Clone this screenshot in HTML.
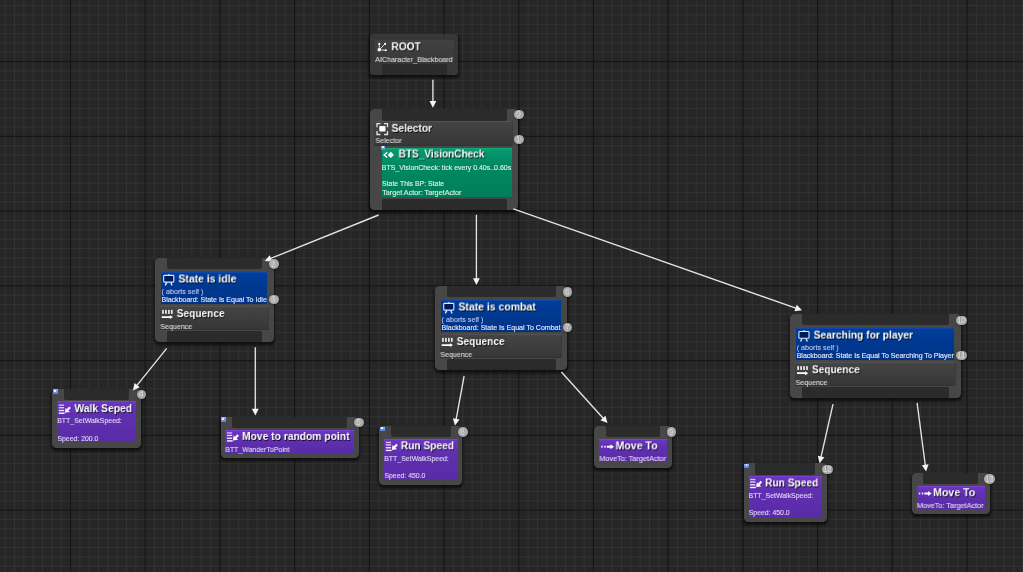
<!DOCTYPE html><html><head><meta charset="utf-8"><title>Behavior Tree</title><style>

html,body{margin:0;padding:0;background:#262626;}
body{width:1023px;height:572px;overflow:hidden;position:relative;font-family:"Liberation Sans", sans-serif;}
.grid,.ov{position:absolute;left:0;top:0;}

div{position:absolute;box-sizing:border-box;}
.node{background:#474747;border-radius:4.5px;box-shadow:0 2px 3px 0.5px rgba(0,0,0,0.62);}
.pin{background:#2b2b2b;}
.pt{border-radius:0 0 2px 2px;}
.pb{border-radius:1.5px 1.5px 0 0;}
.rootn{background:rgba(60,60,60,0.78);border-radius:3.5px;}
.rootbody{background:linear-gradient(rgba(72,72,72,0.55),rgba(60,60,60,0.35));border-radius:1.5px;}
.comp{background:linear-gradient(#444444,#373737);border-top:1px solid #525252;border-bottom:1px solid #323232;border-right:1px solid #3a3a3a;}
.green{background:linear-gradient(#089a70,#008a63 30%,#007e5a);border-top:1px solid #12a67b;}
.blue{background:linear-gradient(#013d9a,#003890 50%,#003385);border-top:1px solid #0c48a8;}
.purple{background:linear-gradient(#6b35c2,#6030b2 30%,#5a2ba6);border-top:1px solid #7a40d2;}
.badge{height:9.5px;border-radius:4.75px;background:radial-gradient(ellipse at 48% 45%,#b6b6b6 25%,#969696 100%);box-shadow:0 0.5px 1.5px rgba(0,0,0,0.6);text-align:center;overflow:visible;}
.badge span{position:absolute;left:0;right:0;top:0.6px;font-size:8.6px;line-height:9px;color:#dedede;text-shadow:0.5px 0.4px 0.4px rgba(80,80,80,0.6);letter-spacing:-0.5px;text-indent:-0.5px;will-change:transform;}
.bsq{width:4.5px;height:4.5px;background:linear-gradient(#8fb2ff,#4f7df0);}
.bsq i{position:absolute;left:1.4px;top:0.8px;width:1.7px;height:1.8px;background:#e8f0ff;display:block;}
.txl{left:0;top:0;width:1023px;height:572px;will-change:transform;}
.tx{position:absolute;left:0;top:0;white-space:nowrap;transform-origin:0 0;line-height:1;}
.title{will-change:transform;line-height:20px;font-weight:bold;font-size:11.70px;color:#fff;text-shadow:0.9px 0.9px 0 rgba(0,0,0,0.85);}
.sub{line-height:21px;font-size:7.50px;color:#d4d4d4;-webkit-text-stroke:0.15px;}

</style></head><body>
<svg class="grid" width="1023" height="572"><g fill="#323232"><rect x="4.58" y="0" width="1.1" height="572"/><rect x="13.92" y="0" width="1.1" height="572"/><rect x="23.26" y="0" width="1.1" height="572"/><rect x="32.60" y="0" width="1.1" height="572"/><rect x="41.93" y="0" width="1.1" height="572"/><rect x="51.27" y="0" width="1.1" height="572"/><rect x="60.61" y="0" width="1.1" height="572"/><rect x="79.29" y="0" width="1.1" height="572"/><rect x="88.63" y="0" width="1.1" height="572"/><rect x="97.97" y="0" width="1.1" height="572"/><rect x="107.30" y="0" width="1.1" height="572"/><rect x="116.64" y="0" width="1.1" height="572"/><rect x="125.98" y="0" width="1.1" height="572"/><rect x="135.32" y="0" width="1.1" height="572"/><rect x="154.00" y="0" width="1.1" height="572"/><rect x="163.34" y="0" width="1.1" height="572"/><rect x="172.68" y="0" width="1.1" height="572"/><rect x="182.01" y="0" width="1.1" height="572"/><rect x="191.35" y="0" width="1.1" height="572"/><rect x="200.69" y="0" width="1.1" height="572"/><rect x="210.03" y="0" width="1.1" height="572"/><rect x="228.71" y="0" width="1.1" height="572"/><rect x="238.05" y="0" width="1.1" height="572"/><rect x="247.39" y="0" width="1.1" height="572"/><rect x="256.72" y="0" width="1.1" height="572"/><rect x="266.06" y="0" width="1.1" height="572"/><rect x="275.40" y="0" width="1.1" height="572"/><rect x="284.74" y="0" width="1.1" height="572"/><rect x="303.42" y="0" width="1.1" height="572"/><rect x="312.76" y="0" width="1.1" height="572"/><rect x="322.10" y="0" width="1.1" height="572"/><rect x="331.43" y="0" width="1.1" height="572"/><rect x="340.77" y="0" width="1.1" height="572"/><rect x="350.11" y="0" width="1.1" height="572"/><rect x="359.45" y="0" width="1.1" height="572"/><rect x="378.13" y="0" width="1.1" height="572"/><rect x="387.47" y="0" width="1.1" height="572"/><rect x="396.81" y="0" width="1.1" height="572"/><rect x="406.14" y="0" width="1.1" height="572"/><rect x="415.48" y="0" width="1.1" height="572"/><rect x="424.82" y="0" width="1.1" height="572"/><rect x="434.16" y="0" width="1.1" height="572"/><rect x="452.84" y="0" width="1.1" height="572"/><rect x="462.18" y="0" width="1.1" height="572"/><rect x="471.52" y="0" width="1.1" height="572"/><rect x="480.85" y="0" width="1.1" height="572"/><rect x="490.19" y="0" width="1.1" height="572"/><rect x="499.53" y="0" width="1.1" height="572"/><rect x="508.87" y="0" width="1.1" height="572"/><rect x="527.55" y="0" width="1.1" height="572"/><rect x="536.89" y="0" width="1.1" height="572"/><rect x="546.23" y="0" width="1.1" height="572"/><rect x="555.57" y="0" width="1.1" height="572"/><rect x="564.90" y="0" width="1.1" height="572"/><rect x="574.24" y="0" width="1.1" height="572"/><rect x="583.58" y="0" width="1.1" height="572"/><rect x="602.26" y="0" width="1.1" height="572"/><rect x="611.60" y="0" width="1.1" height="572"/><rect x="620.94" y="0" width="1.1" height="572"/><rect x="630.27" y="0" width="1.1" height="572"/><rect x="639.61" y="0" width="1.1" height="572"/><rect x="648.95" y="0" width="1.1" height="572"/><rect x="658.29" y="0" width="1.1" height="572"/><rect x="676.97" y="0" width="1.1" height="572"/><rect x="686.31" y="0" width="1.1" height="572"/><rect x="695.65" y="0" width="1.1" height="572"/><rect x="704.99" y="0" width="1.1" height="572"/><rect x="714.32" y="0" width="1.1" height="572"/><rect x="723.66" y="0" width="1.1" height="572"/><rect x="733.00" y="0" width="1.1" height="572"/><rect x="751.68" y="0" width="1.1" height="572"/><rect x="761.02" y="0" width="1.1" height="572"/><rect x="770.36" y="0" width="1.1" height="572"/><rect x="779.69" y="0" width="1.1" height="572"/><rect x="789.03" y="0" width="1.1" height="572"/><rect x="798.37" y="0" width="1.1" height="572"/><rect x="807.71" y="0" width="1.1" height="572"/><rect x="826.39" y="0" width="1.1" height="572"/><rect x="835.73" y="0" width="1.1" height="572"/><rect x="845.07" y="0" width="1.1" height="572"/><rect x="854.40" y="0" width="1.1" height="572"/><rect x="863.74" y="0" width="1.1" height="572"/><rect x="873.08" y="0" width="1.1" height="572"/><rect x="882.42" y="0" width="1.1" height="572"/><rect x="901.10" y="0" width="1.1" height="572"/><rect x="910.44" y="0" width="1.1" height="572"/><rect x="919.78" y="0" width="1.1" height="572"/><rect x="929.12" y="0" width="1.1" height="572"/><rect x="938.45" y="0" width="1.1" height="572"/><rect x="947.79" y="0" width="1.1" height="572"/><rect x="957.13" y="0" width="1.1" height="572"/><rect x="975.81" y="0" width="1.1" height="572"/><rect x="985.15" y="0" width="1.1" height="572"/><rect x="994.49" y="0" width="1.1" height="572"/><rect x="1003.82" y="0" width="1.1" height="572"/><rect x="1013.16" y="0" width="1.1" height="572"/><rect x="1022.50" y="0" width="1.1" height="572"/><rect x="0" y="4.98" width="1023" height="1.1"/><rect x="0" y="14.32" width="1023" height="1.1"/><rect x="0" y="23.67" width="1023" height="1.1"/><rect x="0" y="33.02" width="1023" height="1.1"/><rect x="0" y="42.36" width="1023" height="1.1"/><rect x="0" y="51.71" width="1023" height="1.1"/><rect x="0" y="70.40" width="1023" height="1.1"/><rect x="0" y="79.74" width="1023" height="1.1"/><rect x="0" y="89.09" width="1023" height="1.1"/><rect x="0" y="98.43" width="1023" height="1.1"/><rect x="0" y="107.78" width="1023" height="1.1"/><rect x="0" y="117.12" width="1023" height="1.1"/><rect x="0" y="126.47" width="1023" height="1.1"/><rect x="0" y="145.16" width="1023" height="1.1"/><rect x="0" y="154.50" width="1023" height="1.1"/><rect x="0" y="163.84" width="1023" height="1.1"/><rect x="0" y="173.19" width="1023" height="1.1"/><rect x="0" y="182.53" width="1023" height="1.1"/><rect x="0" y="191.88" width="1023" height="1.1"/><rect x="0" y="201.22" width="1023" height="1.1"/><rect x="0" y="219.91" width="1023" height="1.1"/><rect x="0" y="229.26" width="1023" height="1.1"/><rect x="0" y="238.60" width="1023" height="1.1"/><rect x="0" y="247.95" width="1023" height="1.1"/><rect x="0" y="257.30" width="1023" height="1.1"/><rect x="0" y="266.64" width="1023" height="1.1"/><rect x="0" y="275.99" width="1023" height="1.1"/><rect x="0" y="294.68" width="1023" height="1.1"/><rect x="0" y="304.02" width="1023" height="1.1"/><rect x="0" y="313.37" width="1023" height="1.1"/><rect x="0" y="322.71" width="1023" height="1.1"/><rect x="0" y="332.06" width="1023" height="1.1"/><rect x="0" y="341.40" width="1023" height="1.1"/><rect x="0" y="350.75" width="1023" height="1.1"/><rect x="0" y="369.44" width="1023" height="1.1"/><rect x="0" y="378.78" width="1023" height="1.1"/><rect x="0" y="388.13" width="1023" height="1.1"/><rect x="0" y="397.47" width="1023" height="1.1"/><rect x="0" y="406.82" width="1023" height="1.1"/><rect x="0" y="416.16" width="1023" height="1.1"/><rect x="0" y="425.51" width="1023" height="1.1"/><rect x="0" y="444.20" width="1023" height="1.1"/><rect x="0" y="453.54" width="1023" height="1.1"/><rect x="0" y="462.89" width="1023" height="1.1"/><rect x="0" y="472.23" width="1023" height="1.1"/><rect x="0" y="481.58" width="1023" height="1.1"/><rect x="0" y="490.92" width="1023" height="1.1"/><rect x="0" y="500.27" width="1023" height="1.1"/><rect x="0" y="518.96" width="1023" height="1.1"/><rect x="0" y="528.30" width="1023" height="1.1"/><rect x="0" y="537.65" width="1023" height="1.1"/><rect x="0" y="546.99" width="1023" height="1.1"/><rect x="0" y="556.34" width="1023" height="1.1"/><rect x="0" y="565.68" width="1023" height="1.1"/></g><g fill="#151515"><rect x="69.95" y="0" width="1.1" height="572"/><rect x="144.66" y="0" width="1.1" height="572"/><rect x="219.37" y="0" width="1.1" height="572"/><rect x="294.08" y="0" width="1.1" height="572"/><rect x="368.79" y="0" width="1.1" height="572"/><rect x="443.50" y="0" width="1.1" height="572"/><rect x="518.21" y="0" width="1.1" height="572"/><rect x="592.92" y="0" width="1.1" height="572"/><rect x="667.63" y="0" width="1.1" height="572"/><rect x="742.34" y="0" width="1.1" height="572"/><rect x="817.05" y="0" width="1.1" height="572"/><rect x="891.76" y="0" width="1.1" height="572"/><rect x="966.47" y="0" width="1.1" height="572"/><rect x="0" y="61.05" width="1023" height="1.1"/><rect x="0" y="135.81" width="1023" height="1.1"/><rect x="0" y="210.57" width="1023" height="1.1"/><rect x="0" y="285.33" width="1023" height="1.1"/><rect x="0" y="360.09" width="1023" height="1.1"/><rect x="0" y="434.85" width="1023" height="1.1"/><rect x="0" y="509.61" width="1023" height="1.1"/></g></svg>
<div class="node rootn" style="left:370.30px;top:34.20px;width:87.80px;height:41.20px;"></div>
<div class="rootbody" style="left:375.00px;top:40.00px;width:79.20px;height:23.40px;"></div>
<div class="pin pb" style="left:381.70px;top:64.20px;width:65.00px;height:11.20px;"></div>
<div class="node" style="left:370.00px;top:109.00px;width:148.00px;height:100.90px;"></div>
<div class="pin pt" style="left:381.60px;top:109.00px;width:125.40px;height:11.60px;"></div>
<div class="comp" style="left:374.20px;top:121.00px;width:139.10px;height:24.70px;"></div>
<div class="green" style="left:381.70px;top:147.50px;width:130.80px;height:49.80px;"></div>
<div class="pin pb" style="left:381.60px;top:199.00px;width:125.40px;height:10.90px;"></div>
<div class="bsq" style="left:380.70px;top:145.50px;"><i></i></div>
<div class="node" style="left:155.10px;top:257.90px;width:118.90px;height:84.00px;"></div>
<div class="pin pt" style="left:166.90px;top:257.90px;width:95.20px;height:11.30px;"></div>
<div class="blue" style="left:160.80px;top:271.90px;width:106.60px;height:32.40px;"></div>
<div class="comp" style="left:159.90px;top:306.20px;width:108.90px;height:23.90px;"></div>
<div class="pin pb" style="left:166.90px;top:331.20px;width:95.20px;height:10.70px;"></div>
<div class="node" style="left:435.10px;top:285.90px;width:132.40px;height:84.00px;"></div>
<div class="pin pt" style="left:446.90px;top:285.90px;width:108.70px;height:11.30px;"></div>
<div class="blue" style="left:440.80px;top:299.90px;width:120.10px;height:32.40px;"></div>
<div class="comp" style="left:439.90px;top:334.20px;width:122.40px;height:23.90px;"></div>
<div class="pin pb" style="left:446.90px;top:359.20px;width:108.70px;height:10.70px;"></div>
<div class="node" style="left:790.30px;top:314.00px;width:170.50px;height:84.00px;"></div>
<div class="pin pt" style="left:802.10px;top:314.00px;width:146.80px;height:11.30px;"></div>
<div class="blue" style="left:796.00px;top:328.00px;width:158.20px;height:32.40px;"></div>
<div class="comp" style="left:795.10px;top:362.30px;width:160.50px;height:23.90px;"></div>
<div class="pin pb" style="left:802.10px;top:387.30px;width:146.80px;height:10.70px;"></div>
<div class="node" style="left:52.20px;top:388.90px;width:88.50px;height:58.70px;"></div>
<div class="pin pt" style="left:64.00px;top:388.90px;width:64.90px;height:11.40px;"></div>
<div class="purple" style="left:57.20px;top:401.40px;width:78.70px;height:40.90px;"></div>
<div class="bsq" style="left:53.10px;top:389.40px;"><i></i></div>
<div class="node" style="left:379.20px;top:426.10px;width:83.20px;height:58.70px;"></div>
<div class="pin pt" style="left:391.00px;top:426.10px;width:59.60px;height:11.40px;"></div>
<div class="purple" style="left:384.20px;top:438.60px;width:73.40px;height:40.90px;"></div>
<div class="bsq" style="left:380.10px;top:426.60px;"><i></i></div>
<div class="node" style="left:743.50px;top:463.20px;width:83.30px;height:58.70px;"></div>
<div class="pin pt" style="left:755.30px;top:463.20px;width:59.70px;height:11.40px;"></div>
<div class="purple" style="left:748.50px;top:475.70px;width:73.50px;height:40.90px;"></div>
<div class="bsq" style="left:744.40px;top:463.70px;"><i></i></div>
<div class="node" style="left:220.50px;top:416.60px;width:138.20px;height:41.60px;"></div>
<div class="pin pt" style="left:231.80px;top:416.60px;width:115.60px;height:11.60px;"></div>
<div class="purple" style="left:225.30px;top:429.50px;width:128.60px;height:23.60px;"></div>
<div class="bsq" style="left:221.10px;top:417.10px;"><i></i></div>
<div class="node" style="left:594.00px;top:426.30px;width:77.90px;height:41.40px;"></div>
<div class="pin pt" style="left:605.80px;top:426.30px;width:54.30px;height:10.90px;"></div>
<div class="purple" style="left:599.10px;top:438.70px;width:67.80px;height:23.60px;"></div>
<div class="node" style="left:911.60px;top:473.10px;width:78.00px;height:41.40px;"></div>
<div class="pin pt" style="left:923.40px;top:473.10px;width:54.40px;height:10.90px;"></div>
<div class="purple" style="left:916.70px;top:485.50px;width:67.90px;height:23.60px;"></div>
<svg class="ov" width="1023" height="572"><g stroke="#e4e4e4" stroke-width="1.35" fill="#f4f4f4">
<line x1="432.90" y1="79.80" x2="432.90" y2="102.00"/>
<polygon stroke="none" points="432.90,107.80 429.50,101.00 436.30,101.00"/>
<line x1="378.60" y1="215.00" x2="270.08" y2="258.73"/>
<polygon stroke="none" points="264.70,260.90 269.74,255.20 272.28,261.51"/>
<line x1="476.40" y1="214.80" x2="476.40" y2="279.20"/>
<polygon stroke="none" points="476.40,285.00 473.00,278.20 479.80,278.20"/>
<line x1="513.30" y1="208.80" x2="796.53" y2="308.38"/>
<polygon stroke="none" points="802.00,310.30 794.46,311.25 796.71,304.84"/>
<line x1="166.70" y1="348.40" x2="136.54" y2="385.88"/>
<polygon stroke="none" points="132.90,390.40 134.51,382.97 139.81,387.23"/>
<line x1="255.30" y1="347.30" x2="255.30" y2="409.80"/>
<polygon stroke="none" points="255.30,415.60 251.90,408.80 258.70,408.80"/>
<line x1="464.10" y1="376.20" x2="456.05" y2="419.80"/>
<polygon stroke="none" points="455.00,425.50 452.89,418.20 459.58,419.43"/>
<line x1="561.40" y1="372.00" x2="603.61" y2="418.70"/>
<polygon stroke="none" points="607.50,423.00 600.42,420.24 605.46,415.68"/>
<line x1="833.00" y1="404.20" x2="820.88" y2="457.54"/>
<polygon stroke="none" points="819.60,463.20 817.79,455.82 824.42,457.32"/>
<line x1="917.10" y1="402.90" x2="925.35" y2="465.75"/>
<polygon stroke="none" points="926.10,471.50 921.84,465.20 928.59,464.32"/>
</g></svg>
<svg class="ov" width="1023" height="572">
<g stroke="#e8e8e8" stroke-width="0.9" fill="#fff"><line x1="379.2" y1="49.8" x2="379.3" y2="43.9"/><line x1="379.2" y1="49.8" x2="385.1" y2="43.9"/><line x1="379.2" y1="49.8" x2="385.8" y2="50.2"/><circle cx="379.2" cy="49.8" r="1.7" stroke="none"/><circle cx="379.3" cy="43.9" r="1.05" stroke="none"/><circle cx="385.1" cy="43.9" r="1.05" stroke="none"/><circle cx="385.8" cy="50.2" r="1.05" stroke="none"/></g>
<path d="M377.00 126.50 v-2.80 M377.00 123.70 h2.80 M384.70 123.70 h2.80 M387.50 123.70 v2.80 M377.00 131.70 v2.80 M377.00 134.50 h2.80 M384.70 134.50 h2.80 M387.50 134.50 v-2.80 " stroke="#e4e4e4" stroke-width="1.3" fill="none" stroke-linecap="square"/><rect x="379.30" y="126.00" width="6.2" height="5.6" rx="0.8" fill="#fff"/>
<path d="M387.30 152.30 l-3.2 2.6 l3.2 2.7" stroke="#fff" stroke-width="1.35" fill="none"/><path d="M387.70 154.90 l3.1 -3.05 l3.1 3.05 l-3.1 3.05 z" fill="#fff"/>
<rect x="163.70" y="275.40" width="10.10" height="6.70" rx="0.8" fill="#001a58" stroke="#dfe7ff" stroke-width="1.1"/><path d="M167.45 275.20 l1.3 -1.2 l1.3 1.2 z" fill="#e6ecff"/><path d="M166.80 282.40 l-1.5 3 M170.80 282.40 l1.3 3" stroke="#e6ecff" stroke-width="1.3" fill="none"/>
<rect x="162.10" y="309.80" width="1.7" height="4.1" rx="0.6" fill="#ececec"/><rect x="165.05" y="309.80" width="1.7" height="4.1" rx="0.6" fill="#ececec"/><rect x="168.00" y="309.80" width="1.7" height="4.1" rx="0.6" fill="#ececec"/><rect x="170.95" y="309.80" width="1.7" height="4.1" rx="0.6" fill="#ececec"/><path d="M161.70 316.25 h8.2 v-1.1 l3.1 1.95 l-3.1 1.95 v-1.1 h-8.2 z" fill="#fff"/>
<rect x="443.70" y="303.40" width="10.10" height="6.70" rx="0.8" fill="#001a58" stroke="#dfe7ff" stroke-width="1.1"/><path d="M447.45 303.20 l1.3 -1.2 l1.3 1.2 z" fill="#e6ecff"/><path d="M446.80 310.40 l-1.5 3 M450.80 310.40 l1.3 3" stroke="#e6ecff" stroke-width="1.3" fill="none"/>
<rect x="442.10" y="337.80" width="1.7" height="4.1" rx="0.6" fill="#ececec"/><rect x="445.05" y="337.80" width="1.7" height="4.1" rx="0.6" fill="#ececec"/><rect x="448.00" y="337.80" width="1.7" height="4.1" rx="0.6" fill="#ececec"/><rect x="450.95" y="337.80" width="1.7" height="4.1" rx="0.6" fill="#ececec"/><path d="M441.70 344.25 h8.2 v-1.1 l3.1 1.95 l-3.1 1.95 v-1.1 h-8.2 z" fill="#fff"/>
<rect x="798.90" y="331.50" width="10.10" height="6.70" rx="0.8" fill="#001a58" stroke="#dfe7ff" stroke-width="1.1"/><path d="M802.65 331.30 l1.3 -1.2 l1.3 1.2 z" fill="#e6ecff"/><path d="M802.00 338.50 l-1.5 3 M806.00 338.50 l1.3 3" stroke="#e6ecff" stroke-width="1.3" fill="none"/>
<rect x="797.30" y="365.90" width="1.7" height="4.1" rx="0.6" fill="#ececec"/><rect x="800.25" y="365.90" width="1.7" height="4.1" rx="0.6" fill="#ececec"/><rect x="803.20" y="365.90" width="1.7" height="4.1" rx="0.6" fill="#ececec"/><rect x="806.15" y="365.90" width="1.7" height="4.1" rx="0.6" fill="#ececec"/><path d="M796.90 372.35 h8.2 v-1.1 l3.1 1.95 l-3.1 1.95 v-1.1 h-8.2 z" fill="#fff"/>
<rect x="58.80" y="404.55" width="5.30" height="1.35" fill="#fff" opacity="0.70"/><rect x="58.80" y="407.05" width="5.30" height="1.35" fill="#fff" opacity="0.80"/><rect x="58.80" y="409.85" width="5.30" height="1.35" fill="#fff" opacity="0.90"/><rect x="58.80" y="412.55" width="5.80" height="1.35" fill="#fff" opacity="1.00"/><path d="M70.00 407.20 L67.40 410.10" stroke="#fff" stroke-width="2.2" fill="none"/><path d="M64.90 412.70 L65.50 407.90 L70.00 412.10 z" fill="#fff"/>
<rect x="385.80" y="441.75" width="5.30" height="1.35" fill="#fff" opacity="0.70"/><rect x="385.80" y="444.25" width="5.30" height="1.35" fill="#fff" opacity="0.80"/><rect x="385.80" y="447.05" width="5.30" height="1.35" fill="#fff" opacity="0.90"/><rect x="385.80" y="449.75" width="5.80" height="1.35" fill="#fff" opacity="1.00"/><path d="M397.00 444.40 L394.40 447.30" stroke="#fff" stroke-width="2.2" fill="none"/><path d="M391.90 449.90 L392.50 445.10 L397.00 449.30 z" fill="#fff"/>
<rect x="750.10" y="478.85" width="5.30" height="1.35" fill="#fff" opacity="0.70"/><rect x="750.10" y="481.35" width="5.30" height="1.35" fill="#fff" opacity="0.80"/><rect x="750.10" y="484.15" width="5.30" height="1.35" fill="#fff" opacity="0.90"/><rect x="750.10" y="486.85" width="5.80" height="1.35" fill="#fff" opacity="1.00"/><path d="M761.30 481.50 L758.70 484.40" stroke="#fff" stroke-width="2.2" fill="none"/><path d="M756.20 487.00 L756.80 482.20 L761.30 486.40 z" fill="#fff"/>
<rect x="226.90" y="432.25" width="5.30" height="1.35" fill="#fff" opacity="0.70"/><rect x="226.90" y="434.75" width="5.30" height="1.35" fill="#fff" opacity="0.80"/><rect x="226.90" y="437.55" width="5.30" height="1.35" fill="#fff" opacity="0.90"/><rect x="226.90" y="440.25" width="5.80" height="1.35" fill="#fff" opacity="1.00"/><path d="M238.10 434.90 L235.50 437.80" stroke="#fff" stroke-width="2.2" fill="none"/><path d="M233.00 440.40 L233.60 435.60 L238.10 439.80 z" fill="#fff"/>
<rect x="601.20" y="445.75" width="1.5" height="1.9" fill="#f4f0ff"/><rect x="604.20" y="445.75" width="1.5" height="1.9" fill="#f4f0ff"/><path d="M606.80 445.75 h3.7 v-1.5 l3.5 2.45 l-3.5 2.45 v-1.5 h-3.7 z" fill="#fff"/>
<rect x="918.80" y="492.55" width="1.5" height="1.9" fill="#f4f0ff"/><rect x="921.80" y="492.55" width="1.5" height="1.9" fill="#f4f0ff"/><path d="M924.40 492.55 h3.7 v-1.5 l3.5 2.45 l-3.5 2.45 v-1.5 h-3.7 z" fill="#fff"/>
</svg>
<div class="txl">
<span id="t0" class="tx title" style="transform:translate(391.40px,36.30px) scaleX(0.8723);">ROOT</span>
<span id="t1" class="tx sub" style="transform:translate(375.20px,49.00px) scaleX(0.9483);">AICharacter_Blackboard</span>
<span id="t2" class="tx title" style="transform:translate(391.55px,117.80px) scaleX(0.8794);">Selector</span>
<span id="t3" class="tx sub" style="transform:translate(375.42px,130.00px) scaleX(0.9556);">Selector</span>
<span id="t4" class="tx title" style="transform:translate(398.61px,143.50px) scaleX(0.8597);">BTS_VisionCheck</span>
<span id="t5" class="tx sub" style="transform:translate(381.84px,157.00px) scaleX(0.9298);color:#d6eee5;">BTS_VisionCheck: tick every 0.40s..0.60s</span>
<span id="t6" class="tx sub" style="transform:translate(382.03px,173.00px) scaleX(0.9220);color:#d6eee5;">State This BP: State</span>
<span id="t7" class="tx sub" style="transform:translate(382.21px,182.00px) scaleX(0.9622);color:#d6eee5;">Target Actor: TargetActor</span>
<span id="t8" class="tx title" style="transform:translate(178.44px,268.50px) scaleX(0.8925);">State is idle</span>
<span id="t9" class="tx sub" style="transform:translate(161.52px,281.00px) scaleX(0.9579);color:#b2c0ea;">( aborts self )</span>
<span id="t10" class="tx sub" style="transform:translate(161.44px,289.00px) scaleX(0.9372);color:#e0e7fb;">Blackboard: State Is Equal To Idle</span>
<span id="t11" class="tx title" style="transform:translate(176.75px,303.10px) scaleX(0.8661);">Sequence</span>
<span id="t12" class="tx sub" style="transform:translate(160.32px,316.00px) scaleX(0.9455);">Sequence</span>
<span id="t13" class="tx title" style="transform:translate(458.44px,296.50px) scaleX(0.8952);">State is combat</span>
<span id="t14" class="tx sub" style="transform:translate(441.52px,309.00px) scaleX(0.9579);color:#b2c0ea;">( aborts self )</span>
<span id="t15" class="tx sub" style="transform:translate(441.44px,317.00px) scaleX(0.9405);color:#e0e7fb;">Blackboard: State Is Equal To Combat</span>
<span id="t16" class="tx title" style="transform:translate(456.75px,331.10px) scaleX(0.8661);">Sequence</span>
<span id="t17" class="tx sub" style="transform:translate(440.32px,344.00px) scaleX(0.9455);">Sequence</span>
<span id="t18" class="tx title" style="transform:translate(813.65px,324.60px) scaleX(0.8792);">Searching for player</span>
<span id="t19" class="tx sub" style="transform:translate(796.72px,337.00px) scaleX(0.9579);color:#b2c0ea;">( aborts self )</span>
<span id="t20" class="tx sub" style="transform:translate(796.64px,345.00px) scaleX(0.9388);color:#e0e7fb;">Blackboard: State Is Equal To Searching To Player</span>
<span id="t21" class="tx title" style="transform:translate(811.95px,359.20px) scaleX(0.8661);">Sequence</span>
<span id="t22" class="tx sub" style="transform:translate(795.52px,372.00px) scaleX(0.9455);">Sequence</span>
<span id="t23" class="tx title" style="transform:translate(74.50px,398.10px) scaleX(0.8837);">Walk Seped</span>
<span id="t24" class="tx sub" style="transform:translate(57.24px,410.00px) scaleX(0.9255);color:#ddd3f2;">BTT_SetWalkSpeed:</span>
<span id="t25" class="tx sub" style="transform:translate(57.43px,428.00px) scaleX(0.9180);color:#ddd3f2;">Speed: 200.0</span>
<span id="t26" class="tx title" style="transform:translate(400.80px,435.30px) scaleX(0.8706);">Run Speed</span>
<span id="t27" class="tx sub" style="transform:translate(384.24px,448.00px) scaleX(0.9255);color:#ddd3f2;">BTT_SetWalkSpeed:</span>
<span id="t28" class="tx sub" style="transform:translate(384.43px,465.00px) scaleX(0.9180);color:#ddd3f2;">Speed: 450.0</span>
<span id="t29" class="tx title" style="transform:translate(765.10px,472.40px) scaleX(0.8706);">Run Speed</span>
<span id="t30" class="tx sub" style="transform:translate(748.54px,485.00px) scaleX(0.9255);color:#ddd3f2;">BTT_SetWalkSpeed:</span>
<span id="t31" class="tx sub" style="transform:translate(748.73px,502.00px) scaleX(0.9180);color:#ddd3f2;">Speed: 450.0</span>
<span id="t32" class="tx title" style="transform:translate(242.00px,425.90px) scaleX(0.8805);">Move to random point</span>
<span id="t33" class="tx sub" style="transform:translate(225.24px,439.00px) scaleX(0.9272);color:#ddd3f2;">BTT_WanderToPoint</span>
<span id="t34" class="tx title" style="transform:translate(615.58px,435.40px) scaleX(0.9029);">Move To</span>
<span id="t35" class="tx sub" style="transform:translate(599.32px,448.00px) scaleX(0.9705);color:#ddd3f2;">MoveTo: TargetActor</span>
<span id="t36" class="tx title" style="transform:translate(933.18px,482.20px) scaleX(0.9029);">Move To</span>
<span id="t37" class="tx sub" style="transform:translate(916.92px,495.00px) scaleX(0.9705);color:#ddd3f2;">MoveTo: TargetActor</span>
</div>
<div class="badge" style="left:514.15px;top:109.70px;width:9.50px;"><span>0</span></div>
<div class="badge" style="left:514.15px;top:134.70px;width:9.50px;"><span>1</span></div>
<div class="badge" style="left:269.45px;top:259.40px;width:9.50px;"><span>2</span></div>
<div class="badge" style="left:269.45px;top:294.80px;width:9.50px;"><span>3</span></div>
<div class="badge" style="left:562.95px;top:287.40px;width:9.50px;"><span>6</span></div>
<div class="badge" style="left:562.95px;top:322.80px;width:9.50px;"><span>7</span></div>
<div class="badge" style="left:955.50px;top:315.50px;width:11.00px;"><span>10</span></div>
<div class="badge" style="left:955.50px;top:350.90px;width:11.00px;"><span>11</span></div>
<div class="badge" style="left:136.55px;top:389.90px;width:9.50px;"><span>4</span></div>
<div class="badge" style="left:458.25px;top:427.10px;width:9.50px;"><span>8</span></div>
<div class="badge" style="left:821.90px;top:464.70px;width:11.00px;"><span>12</span></div>
<div class="badge" style="left:354.45px;top:417.70px;width:9.50px;"><span>5</span></div>
<div class="badge" style="left:666.65px;top:427.20px;width:9.50px;"><span>9</span></div>
<div class="badge" style="left:983.60px;top:474.00px;width:11.00px;"><span>13</span></div>
</body></html>
